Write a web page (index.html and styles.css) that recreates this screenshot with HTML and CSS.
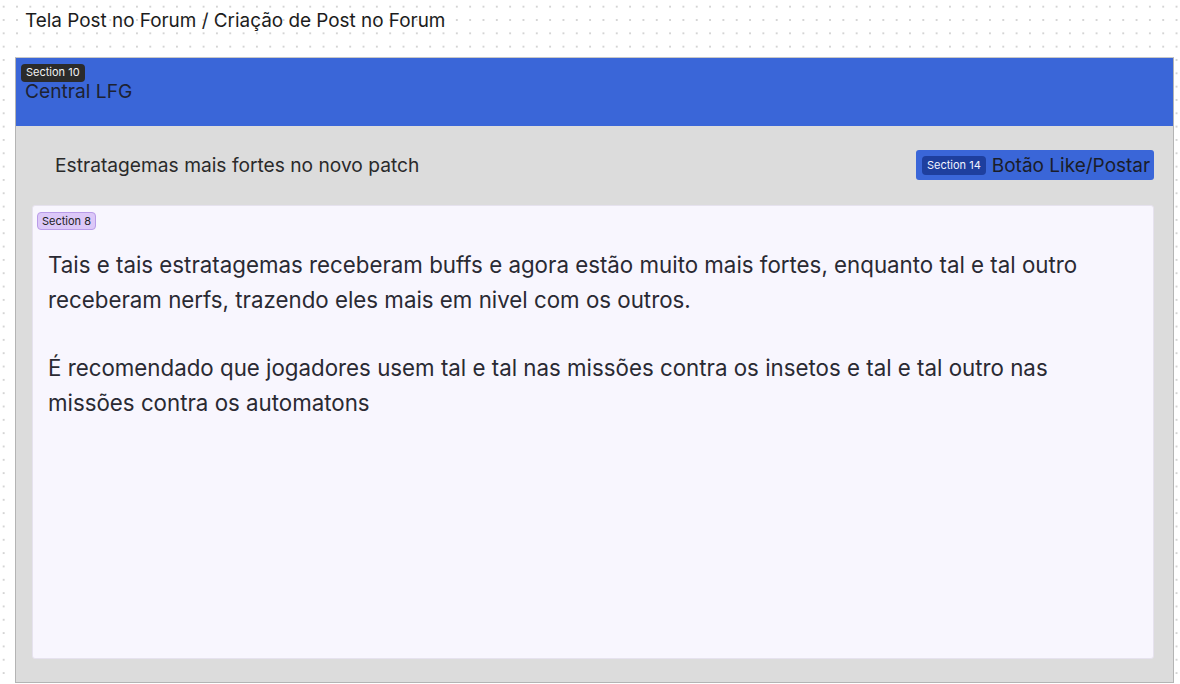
FILE: index.html
```html
<!DOCTYPE html>
<html lang="pt">
<head>
<meta charset="utf-8">
<link rel="stylesheet" href="styles.css">
</head>
<body>
<div class="page-title">Tela Post no Forum / Criação de Post no Forum</div>
<div class="frame">
  <header class="topbar">
    <span class="badge badge-dark">Section 10</span>
    <h1 class="brand">Central LFG</h1>
  </header>
  <main class="content">
    <div class="post-head">
      <h2 class="post-title">Estratagemas mais fortes no novo patch</h2>
      <div class="action-btn">
        <span class="badge badge-blue">Section 14</span>
        <span class="action-label">Botão Like/Postar</span>
      </div>
    </div>
    <section class="post-body">
      <span class="badge badge-purple">Section 8</span>
      <p>Tais e tais estratagemas receberam buffs e agora estão muito mais fortes, enquanto tal e tal outro receberam nerfs, trazendo eles mais em nivel com os outros.</p>
      <p>É recomendado que jogadores usem tal e tal nas missões contra os insetos e tal e tal outro nas missões contra os automatons</p>
    </section>
  </main>
</div>
</body>
</html>
```
FILE: styles.css
```css
* { box-sizing: border-box; }
html, body { margin: 0; padding: 0; }
body {
  width: 1180px;
  height: 684px;
  overflow: hidden;
  font-family: Inter, "Noto Sans", sans-serif;
  background-color: #ffffff;
  background-image: radial-gradient(circle, #d4d4d4 0.9px, transparent 1.2px);
  background-size: 13.33px 13.33px;
  background-position: -3px 0px;
}
.page-title {
  height: 57px;
  padding: 10px 0 0 25px;
  font-size: 18.9px;
  line-height: 22px;
  color: #1c1c1c;
}
.frame {
  margin-left: 15px;
  width: 1159px;
  height: 626px;
  border: 1px solid #b4b4b4;
  border-top-color: #c8c8c8;
  background: #dcdcdc;
  display: flex;
  flex-direction: column;
}
.topbar {
  position: relative;
  height: 68px;
  background: #3a66d8;
  padding: 21px 0 0 9px;
}
.brand {
  margin: 0;
  font-weight: 400;
  font-size: 19.2px;
  line-height: 24px;
  color: #1d2232;
}
.badge {
  display: inline-block;
  font-size: 11px;
  line-height: 17px;
  height: 18px;
  padding: 0 5px;
  border-radius: 4px;
  white-space: nowrap;
}
.topbar .badge {
  position: absolute;
  left: 5px;
  top: 6px;
}
.badge-dark {
  background: #2b2b2b;
  color: #f2f2f2;
}
.badge-blue {
  background: #1e3f9e;
  color: #f0f3ff;
  height: 19px;
  line-height: 19px;
}
.badge-purple {
  background: #dcc8f8;
  border: 1px solid #b99ce8;
  color: #222;
  line-height: 16px;
  padding: 0 4px;
}
.content {
  flex: 1;
  display: flex;
  flex-direction: column;
  padding: 24px 19px 23px 16px;
}
.post-head {
  display: flex;
  align-items: center;
  justify-content: space-between;
  height: 30px;
  margin-bottom: 25px;
}
.post-title {
  margin: 0 0 0 23px;
  font-weight: 400;
  font-size: 19.2px;
  line-height: 22px;
  color: #2a2a2a;
}
.action-btn {
  display: flex;
  align-items: center;
  gap: 6px;
  height: 30px;
  padding: 0 0 0 6px;
  background: #3a66d8;
  border-radius: 3px;
  overflow: hidden;
  width: 238px;
}
.action-label {
  font-size: 19px;
  color: #1a1d2a;
  white-space: nowrap;
}
.post-body {
  flex: 1;
  position: relative;
  background: #f8f6fe;
  border: 1px solid #e6e2ee;
  border-radius: 3px;
  padding: 5px 16px 0 15px;
}
.post-body .badge {
  position: absolute;
  left: 4px;
  top: 6px;
}
.post-body p {
  margin: 0 0 33px;
  font-size: 22.3px;
  line-height: 35px;
  color: #2a2a33;
}
.post-body p:first-of-type {
  margin-top: 36px;
}
```
